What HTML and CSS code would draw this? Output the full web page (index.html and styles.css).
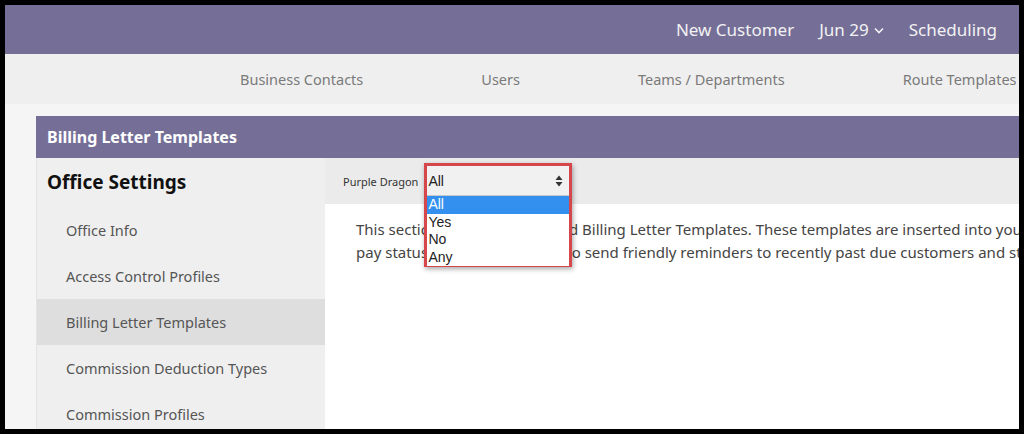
FILE: index.html
```html
<!DOCTYPE html>
<html>
<head>
<meta charset="utf-8">
<link rel="stylesheet" href="styles.css">
</head>
<body>
<div class="frame">
  <header class="topbar">
    <span class="top-link">New Customer</span>
    <span class="top-link">Jun 29 <svg class="chev" width="10" height="7" viewBox="0 0 10 7"><path d="M1 1.5 L5 5.5 L9 1.5" fill="none" stroke="#f2f2f2" stroke-width="1.6"/></svg></span>
    <span class="top-link">Scheduling</span>
  </header>
  <nav class="subnav">
    <span>Business Contacts</span>
    <span>Users</span>
    <span>Teams / Departments</span>
    <span>Route Templates</span>
  </nav>
  <main class="main">
    <section class="panel">
      <div class="panel-header">Billing Letter Templates</div>
      <div class="panel-body">
        <aside class="sidebar">
          <div class="side-title">Office Settings</div>
          <div class="side-item">Office Info</div>
          <div class="side-item">Access Control Profiles</div>
          <div class="side-item active">Billing Letter Templates</div>
          <div class="side-item">Commission Deduction Types</div>
          <div class="side-item">Commission Profiles</div>
        </aside>
        <div class="content">
          <div class="filter-bar">
            <span class="filter-label">Purple Dragon</span>
            <div class="select-wrap">
              <div class="annot">
                <div class="select-row">
                  <span>All</span>
                  <svg class="updown" width="8" height="12" viewBox="0 0 8 12"><path d="M4 0.5 L7.5 5 L0.5 5 Z M4 11.5 L7.5 7 L0.5 7 Z" fill="#333"/></svg>
                </div>
                <ul class="listbox">
                  <li class="selected">All</li>
                  <li>Yes</li>
                  <li>No</li>
                  <li>Any</li>
                </ul>
              </div>
            </div>
          </div>
          <div class="content-body">
            <p class="line">This section is used to view/add Billing Letter Templates. These templates are inserted into your invoices based on</p>
            <p class="line">pay status. You can use these to send friendly reminders to recently past due customers and stronger reminders to others.</p>
          </div>
        </div>
      </div>
    </section>
  </main>
</div>
</body>
</html>
```

FILE: styles.css
```css
html, body {
  margin: 0;
  padding: 0;
  background: #000;
}

.frame {
  margin: 5px;
  width: 1014px;
  height: 424px;
  overflow: hidden;
  background: #f5f5f5;
  font-family: "Noto Sans", "Open Sans", sans-serif;
}

.topbar {
  height: 49px;
  background: #756f98;
  display: flex;
  justify-content: flex-end;
  align-items: center;
  gap: 25px;
  padding-right: 22px;
}

.top-link {
  color: #f2f2f2;
  font-size: 17px;
  display: flex;
  align-items: center;
  gap: 5px;
  margin-top: -1px;
}

.chev {
  margin-top: 2px;
}

.subnav {
  height: 50px;
  background: #efefef;
  display: flex;
  align-items: center;
  gap: 118px;
  padding-left: 235px;
  white-space: nowrap;
  color: #7a7a7a;
  font-size: 14.5px;
}

.subnav span {
  margin-top: -1px;
}

.main {
  padding: 12px 0 0 31px;
}

.panel {
  width: 1100px;
}

.panel-header {
  height: 42px;
  background: #756f98;
  color: #fff;
  font-weight: bold;
  font-size: 16px;
  line-height: 42px;
  padding-left: 11px;
}

.panel-body {
  display: flex;
  height: 300px;
}

.sidebar {
  width: 288px;
  background: #efefef;
  border-left: 1px solid #e4e4e4;
  flex: none;
}

.side-title {
  height: 49px;
  line-height: 49px;
  padding-left: 10px;
  font-size: 19px;
  font-weight: bold;
  color: #111;
}

.side-item {
  height: 46px;
  line-height: 46px;
  padding-left: 29px;
  font-size: 14.5px;
  color: #555;
}

.side-item.active {
  background: #dedede;
}

.content {
  flex: 1;
  display: flex;
  flex-direction: column;
}

.filter-bar {
  height: 46px;
  background: #ebebeb;
  display: flex;
  align-items: center;
  padding-left: 18px;
  gap: 6px;
}

.filter-label {
  font-size: 11px;
  color: #333;
}

.select-wrap {
  position: relative;
  width: 148px;
  height: 46px;
}

.annot {
  position: absolute;
  top: 5px;
  left: 0;
  width: 142px;
  height: 98px;
  border: 3px solid #d5474b;
  box-shadow: 1px 2px 5px rgba(0, 0, 0, 0.35);
  background: #f1f1f1;
  z-index: 2;
  font-family: "Liberation Sans", Arial, sans-serif;
}

.select-row {
  height: 29px;
  display: flex;
  align-items: center;
  justify-content: space-between;
  padding: 0 6px 0 1px;
  font-size: 14px;
  color: #222;
}

.listbox {
  list-style: none;
  margin: 0;
  padding: 0;
  background: #fff;
  border-top: 1px solid #c8c8c8;
  font-size: 14px;
  color: #222;
}

.listbox li {
  height: 17.5px;
  line-height: 17.5px;
  padding-left: 1px;
}

.listbox li.selected {
  background: #3390ee;
  color: #fff;
}

.content-body {
  flex: 1;
  background: #fff;
  padding: 14px 0 0 31px;
}

.line {
  margin: 0;
  white-space: nowrap;
  font-size: 15px;
  line-height: 23px;
  color: #444;
}
```
